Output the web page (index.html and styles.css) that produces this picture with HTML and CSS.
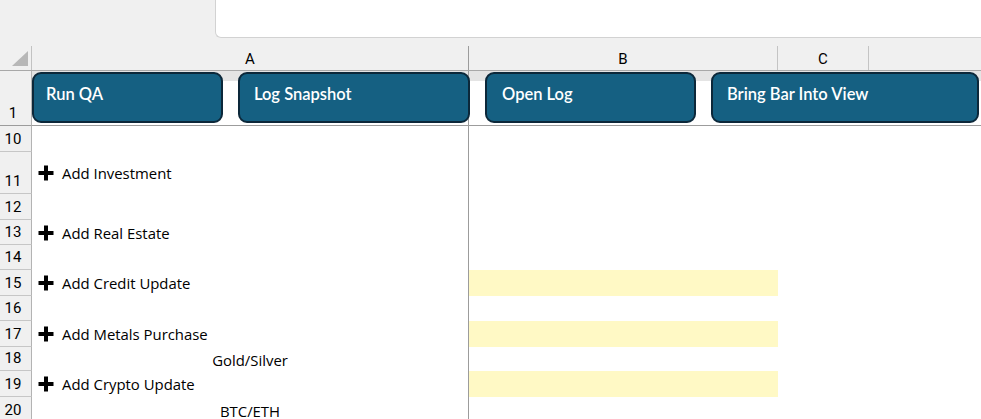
FILE: index.html
```html
<!DOCTYPE html>
<html lang="en">
<head>
<meta charset="utf-8">
<title>Sheet</title>
<link rel="stylesheet" href="styles.css">
</head>
<body>
<div class="topbar"><div class="fx"></div></div>

<div class="row hdr">
  <div class="corner"><svg width="31" height="24" viewBox="0 0 31 24"><polygon points="12,20 28,20 28,5" fill="#b7b7b7"/></svg></div>
  <div class="ch ch-a">A</div>
  <div class="ch ch-b">B</div>
  <div class="ch ch-c">C</div>
  <div class="ch ch-rest"></div>
</div>

<div class="row r1">
  <div class="rh">1</div>
  <div class="ca r1cell"></div>
  <div class="crest r1cell"></div>
  <div class="btns">
    <div class="btn b-run">Run QA</div>
    <div class="btn b-log">Log Snapshot</div>
    <div class="btn b-open">Open Log</div>
    <div class="btn b-bring">Bring Bar Into View</div>
  </div>
</div>

<div class="row h26"><div class="rh">10</div><div class="ca"></div></div>
<div class="row h42"><div class="rh">11</div><div class="ca"><svg class="plus" width="16" height="16" viewBox="0 0 16 16"><path d="M6 0.5h4v5.5h5.5v4h-5.5v5.5h-4v-5.5h-5.5v-4h5.5z"/></svg><span>Add Investment</span></div></div>
<div class="row h26"><div class="rh">12</div><div class="ca"></div></div>
<div class="row h25"><div class="rh">13</div><div class="ca"><svg class="plus" width="16" height="16" viewBox="0 0 16 16"><path d="M6 0.5h4v5.5h5.5v4h-5.5v5.5h-4v-5.5h-5.5v-4h5.5z"/></svg><span>Add Real Estate</span></div></div>
<div class="row h25"><div class="rh">14</div><div class="ca"></div></div>
<div class="row h26"><div class="rh">15</div><div class="ca"><svg class="plus" width="16" height="16" viewBox="0 0 16 16"><path d="M6 0.5h4v5.5h5.5v4h-5.5v5.5h-4v-5.5h-5.5v-4h5.5z"/></svg><span>Add Credit Update</span></div><div class="cb yellow"></div></div>
<div class="row h25"><div class="rh">16</div><div class="ca"></div></div>
<div class="row h26"><div class="rh">17</div><div class="ca"><svg class="plus" width="16" height="16" viewBox="0 0 16 16"><path d="M6 0.5h4v5.5h5.5v4h-5.5v5.5h-4v-5.5h-5.5v-4h5.5z"/></svg><span>Add Metals Purchase</span></div><div class="cb yellow"></div></div>
<div class="row h24"><div class="rh">18</div><div class="ca center"><span>Gold/Silver</span></div></div>
<div class="row h26"><div class="rh">19</div><div class="ca"><svg class="plus" width="16" height="16" viewBox="0 0 16 16"><path d="M6 0.5h4v5.5h5.5v4h-5.5v5.5h-4v-5.5h-5.5v-4h5.5z"/></svg><span>Add Crypto Update</span></div><div class="cb yellow"></div></div>
<div class="row h26"><div class="rh">20</div><div class="ca center"><span>BTC/ETH</span></div></div>
</body>
</html>
```

FILE: styles.css
```css
* { box-sizing: border-box; }
html, body { margin: 0; padding: 0; }
body {
  width: 981px;
  height: 419px;
  overflow: hidden;
  background: #ffffff;
  font-family: Roboto, "Liberation Sans", sans-serif;
  color: #000;
}

.topbar {
  height: 46px;
  background: #f0f0f0;
  padding-left: 215px;
}
.fx {
  height: 38px;
  background: #ffffff;
  border-left: 1px solid #d2d2d2;
  border-bottom: 1px solid #d2d2d2;
  border-bottom-left-radius: 6px;
}

.row {
  display: grid;
  grid-template-columns: 32px 437px 309px 91px 1fr;
}

.hdr {
  height: 25px;
  background: #f0f0f0;
  border-bottom: 1px solid #a8a8a8;
}
.corner {
  border-right: 1px solid #c2c2c2;
  display: flex;
}
.ch {
  font-size: 15px;
  line-height: 18px;
  text-align: center;
  padding-top: 4px;
}
.ch-a { border-right: 1px solid #9c9c9c; }
.ch-b, .ch-c { border-right: 1px solid #c4c4c4; }

.rh {
  grid-column: 1;
  background: #f0f0f0;
  border-right: 1px solid #b3b3b3;
  border-bottom: 1px solid #c6c6c6;
  font-size: 15px;
  line-height: 18px;
  display: flex;
  align-items: flex-end;
  justify-content: center;
  padding-right: 5px;
  padding-bottom: 3px;
}

.ca {
  grid-column: 2;
  border-right: 1px solid #9c9c9c;
  display: flex;
  align-items: center;
  padding-left: 6px;
  font-family: "Open Sans", Roboto, sans-serif;
  font-size: 14.9px;
  line-height: 18px;
}
.ca.center { justify-content: center; padding-left: 0; padding-top: 1px; }
.plus { margin-right: 8px; flex: none; }
.cb { grid-column: 3; }
.yellow { background: #fff9c5; }

.r1 { height: 55px; }
.r1 .rh { grid-row: 1; border-bottom-color: #9c9c9c; }
.r1cell {
  grid-row: 1;
  border-bottom: 1px solid #9c9c9c;
  background: linear-gradient(to bottom, #e4e4e4 0, #e4e4e4 10px, #ffffff 10px);
}
.crest { grid-column: 3 / -1; }
.btns {
  grid-row: 1;
  grid-column: 2 / -1;
  display: flex;
  align-items: flex-start;
  padding-top: 1px;
  gap: 15px;
}
.btn {
  flex: none;
  height: 51px;
  border: 2px solid #0c283a;
  border-radius: 9px;
  background: #156082;
  color: #ffffff;
  font-family: Lato, "Open Sans", sans-serif;
  font-size: 16.5px;
  font-weight: 600;
  line-height: 20px;
  padding: 10px 0 0 12px;
  white-space: nowrap;
}
.b-run { width: 191px; }
.b-log { width: 232px; padding-left: 14px; }
.b-open { width: 211px; padding-left: 15px; }
.b-bring { width: 268px; padding-left: 14px; }

.h24 { height: 24px; }
.h25 { height: 25px; }
.h26 { height: 26px; }
.h42 { height: 42px; }
```
